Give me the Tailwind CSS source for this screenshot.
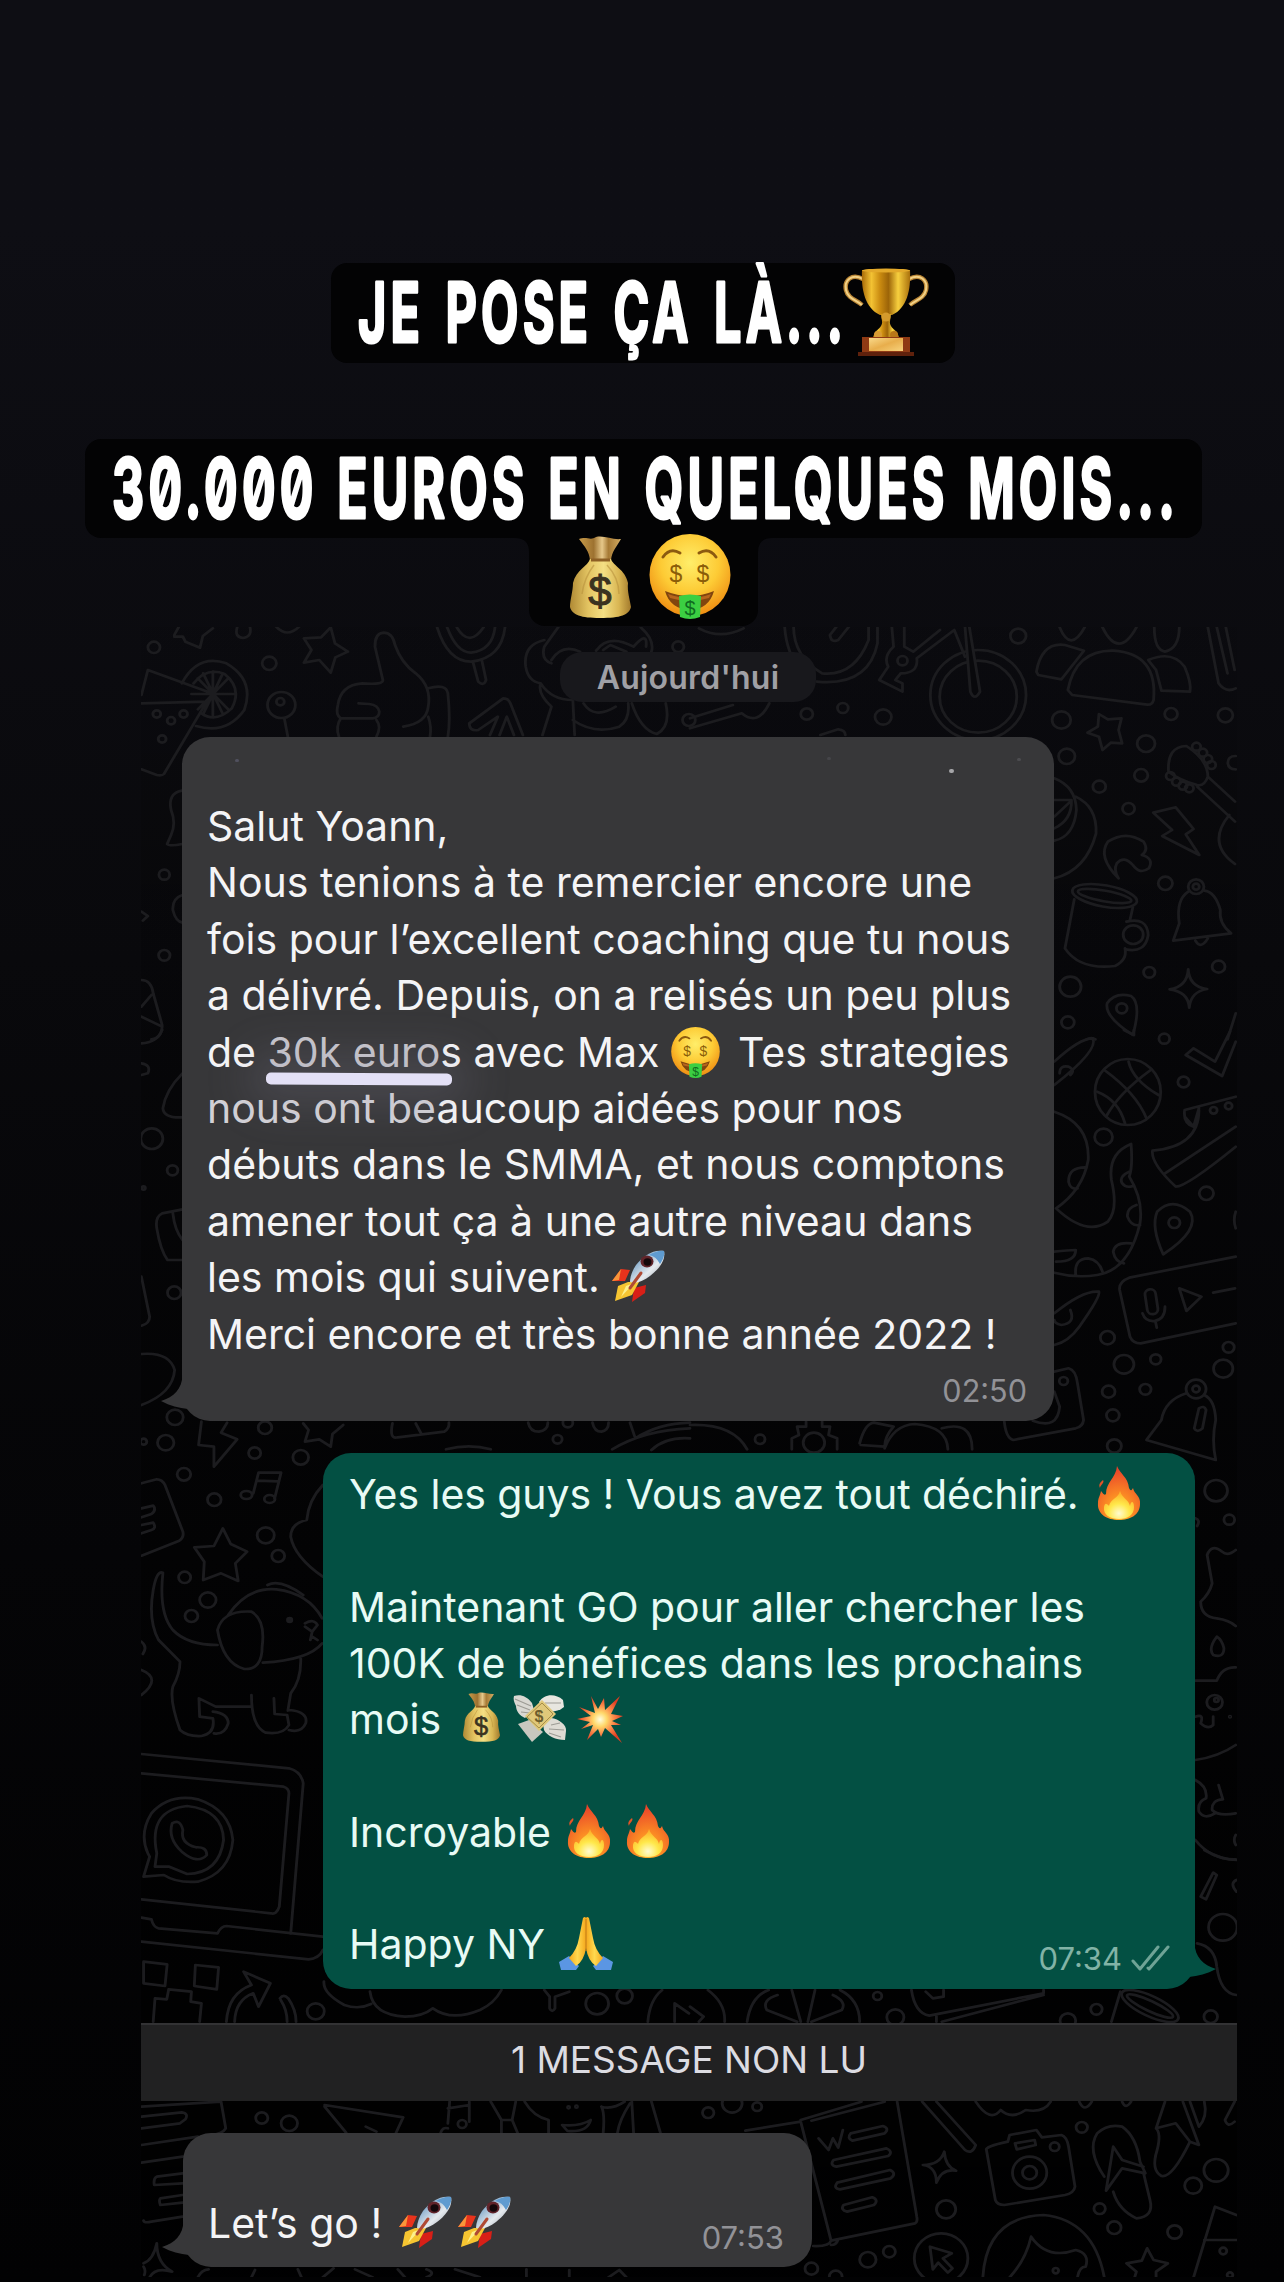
<!DOCTYPE html>
<html lang="fr">
<head>
<meta charset="utf-8">
<title>Story</title>
<meta name="viewport" content="width=1284">
<script src="https://cdn.jsdelivr.net/npm/@tailwindcss/browser@4"></script>
</head>
<body class="bg-black">

<!-- Shared emoji artwork -->
<svg class="absolute w-0 h-0" aria-hidden="true">
  <defs>
    <linearGradient id="gold" x1="0" x2="1" y1="0" y2="0"><stop offset="0" stop-color="#a86a08"/><stop offset=".2" stop-color="#f3c233"/><stop offset=".38" stop-color="#c98a10"/><stop offset=".55" stop-color="#9c6408"/><stop offset=".75" stop-color="#f7cf3e"/><stop offset="1" stop-color="#a9700c"/></linearGradient>
    <linearGradient id="plate" x1="0" x2="1" y1="0" y2="1"><stop offset="0" stop-color="#f9d98a"/><stop offset=".5" stop-color="#e8ae4c"/><stop offset="1" stop-color="#f7d27c"/></linearGradient>
    <linearGradient id="sack" x1="0" x2="1"><stop offset="0" stop-color="#b08a35"/><stop offset=".3" stop-color="#e3c462"/><stop offset=".55" stop-color="#f4df84"/><stop offset=".8" stop-color="#d9b653"/><stop offset="1" stop-color="#a37a2c"/></linearGradient>
    <linearGradient id="neck" x1="0" x2="1"><stop offset="0" stop-color="#c79a4a"/><stop offset=".35" stop-color="#9d7230"/><stop offset=".55" stop-color="#e6c88a"/><stop offset=".7" stop-color="#a77b36"/><stop offset="1" stop-color="#d2ab62"/></linearGradient>
    <radialGradient id="face" cx=".5" cy=".35" r=".65"><stop offset="0" stop-color="#ffee6a"/><stop offset=".55" stop-color="#fdcb35"/><stop offset="1" stop-color="#ef8d12"/></radialGradient>
    <radialGradient id="flame" cx=".5" cy=".85" r=".8"><stop offset="0" stop-color="#ffc42e"/><stop offset=".4" stop-color="#fb8b24"/><stop offset="1" stop-color="#e9432a"/></radialGradient>
    <radialGradient id="flame2" cx=".5" cy=".8" r=".7"><stop offset="0" stop-color="#fffbd0"/><stop offset=".5" stop-color="#ffe84a"/><stop offset="1" stop-color="#fdb52c"/></radialGradient>
    <linearGradient id="hull" x1="0" x2="1" y1="0" y2="1"><stop offset="0" stop-color="#3f82bf"/><stop offset=".35" stop-color="#9dbbd4"/><stop offset=".6" stop-color="#e6eaee"/><stop offset="1" stop-color="#8a95a3"/></linearGradient>
    <radialGradient id="boom"><stop offset="0" stop-color="#fffde0"/><stop offset=".3" stop-color="#ffd86a"/><stop offset=".6" stop-color="#fb8a4a"/><stop offset="1" stop-color="#e03c22"/></radialGradient>
    <linearGradient id="hand" x1="0" x2="1"><stop offset="0" stop-color="#f5a81c"/><stop offset=".5" stop-color="#ffd94f"/><stop offset="1" stop-color="#f5a81c"/></linearGradient>

    <symbol id="trophy" viewBox="0 0 86 89">
      <path d="M20 11C9 5 1 12 3 22C5 31 14 32 19 37" fill="none" stroke="#b98535" stroke-width="4.5"/>
      <path d="M20 11C9 5 1 12 3 22C5 31 14 32 19 37" fill="none" stroke="#f2d186" stroke-width="2"/>
      <path d="M66 11C77 5 85 12 83 22C81 31 72 32 67 37" fill="none" stroke="#b98535" stroke-width="4.5"/>
      <path d="M66 11C77 5 85 12 83 22C81 31 72 32 67 37" fill="none" stroke="#f2d186" stroke-width="2"/>
      <path d="M19 2H67C68 22 64 40 49 47H37C22 40 18 22 19 2Z" fill="url(#gold)"/>
      <ellipse cx="43" cy="2.5" rx="24" ry="2" fill="#e3a92a"/>
      <path d="M38 46H48L47 53C46 57 50 61 54 64L56 69H30L32 64C36 61 40 57 39 53Z" fill="url(#gold)"/>
      <circle cx="43" cy="49" r="4.5" fill="#d49a2c"/><circle cx="35" cy="67" r="4" fill="#d99c34"/><circle cx="51" cy="67" r="4" fill="#b87718"/>
      <path d="M19 69H67V84H71V88H15V84H19Z" fill="#8f3a14"/><path d="M15 84H71V88H15Z" fill="#5f210c"/>
      <path d="M26 70H60V83H26Z" fill="url(#plate)"/>
    </symbol>
    <symbol id="moneybag" viewBox="0 0 61 82">
      <path d="M9 3C17 0 20 5 26 1C34 -1 42 4 51 3C46 12 42 15 41 24H20C19 15 15 11 9 3Z" fill="url(#neck)"/>
      <path d="M20 23H41C43 30 55 33 58 47C57 55 60 64 61 71C59 79 51 82 30 82C11 82 2 79 0 71C0 64 3 55 3 47C6 34 18 30 20 23Z" fill="url(#sack)"/>
      <path d="M21 24H40" stroke="#8d5f24" stroke-width="3"/><path d="M24 29Q14 42 12 58M37 29Q49 42 49 58" stroke="#b9923d" stroke-width="1.5" fill="none" opacity=".6"/>
      <text x="30" y="70" text-anchor="middle" font-family="Liberation Sans" font-size="42" fill="#3b3320" stroke="#3b3320">$</text>
    </symbol>
    <symbol id="moneyface" viewBox="0 0 82 85">
      <ellipse cx="41" cy="41" rx="40.5" ry="41" fill="url(#face)"/>
      <path d="M14 23Q21 13 31 19M50 19Q60 13 67 23" fill="none" stroke="#8c5a10" stroke-width="3" stroke-linecap="round"/>
      <text x="27" y="48" text-anchor="middle" font-family="Liberation Sans" font-size="23" fill="#8b5d08">$</text>
      <text x="54" y="48" text-anchor="middle" font-family="Liberation Sans" font-size="23" fill="#8b5d08">$</text>
      <path d="M16 57Q41 67 65 57Q60 75 41 76Q21 75 16 57Z" fill="#80450f"/>
      <path d="M19 60Q41 68 62 60L60 64Q41 70 21 64Z" fill="#b7651d"/>
      <path d="M30 62Q41 59 52 62L51 83Q41 87 31 83Z" fill="#3bcf42"/>
      <text x="41" y="81" text-anchor="middle" font-family="Liberation Sans" font-size="20" fill="#0f6b20">$</text>
    </symbol>
    <symbol id="rocket" viewBox="0 0 53 52">
      <path d="M18 20L9 19L0 31L13 31Z" fill="#e8331c"/><path d="M9 19L0 31L7 30Z" fill="#f9963a"/>
      <path d="M34 35L33 43L20 52L22 38Z" fill="#d81f17"/>
      <path d="M16 32L27 32L20 45L3 51L6 36Z" fill="#f6c531"/><path d="M14 36L22 33L9 47Z" fill="#fdf08a"/>
      <path d="M52 1C41 -1 31 6 24 15C20 21 18 27 18 32C25 34 31 31 38 26C47 19 54 10 52 1Z" fill="url(#hull)"/>
      <path d="M52 1C48 0 42 2 37 5Q44 6 48 14C51 10 53 5 52 1Z" fill="#5f9bd0"/>
      <ellipse cx="35" cy="11.500" rx="6.500" ry="6" fill="#61242a"/><ellipse cx="35.500" cy="12" rx="4" ry="3.700" fill="#14080b"/>
      <path d="M29 23L18 38" stroke="#b04a34" stroke-width="3" stroke-linecap="round"/>
    </symbol>
    <symbol id="fire" viewBox="0 0 44 54">
      <path d="M20 0C23 8 31 11 32 22C33 24 34 26 36 22C37 28 44 30 43 38C43 49 33 54 22 54C10 54 0 48 1 37C1 32 3 30 4 25C6 27 7 30 9 28C9 16 19 12 20 0Z" fill="url(#flame)"/>
      <path d="M6 14C8 17 3 19 3 22C1 18 4 16 6 14Z" fill="#e45428"/>
      <path d="M23 25C25 32 32 34 33 40C34 34 37 35 37 41C37 49 31 53 22 53C13 53 6 49 7 41C8 36 10 38 12 40C13 33 22 32 23 25Z" fill="url(#flame2)"/>
    </symbol>
    <symbol id="wings" viewBox="0 0 54 48">
      <path d="M1 2C7 0 14 2 19 9L21 16L12 24C7 22 3 17 3 12C1 8 0 5 1 2Z" fill="#d9d8d2"/>
      <path d="M26 8C31 0 42 -1 50 6L51 13C45 18 38 18 33 17Z" fill="#e8e6e0"/>
      <path d="M5 30L16 26L30 38L19 48Z" fill="#c9c7bf"/>
      <path d="M30 30L38 24C46 25 54 31 53 37L52 46C43 46 34 42 31 36Z" fill="#dedcd4"/>
      <path d="M2 5L18 12M4 11L17 16M8 18L17 19M47 29L38 31M51 36L36 35M48 43L36 39M32 9L48 9" stroke="#9d9c95" stroke-width="1.200"/>
      <path d="M12 22L29 6L43 20L26 37Z" fill="#e0c87a"/><path d="M14 23L29 9L40 20L26 34Z" fill="none" stroke="#a68d48"/>
      <text x="26" y="28" text-anchor="middle" font-family="Liberation Sans" font-weight="bold" font-size="16" fill="#6d5c2d">$</text>
    </symbol>
    <symbol id="collision" viewBox="0 0 46 48">
      <path d="M14 1L21 14L27 3L28 15L43 1L34 19L46 21L35 26L44 30L34 30L45 48L28 33L24 42L21 34L10 45L16 30L4 34L13 27L0 24L14 21L2 12L18 18Z" fill="url(#boom)"/>
    </symbol>
    <symbol id="pray" viewBox="0 0 54 54">
      <path d="M0 46L10 40L20 50L17 54H2ZM54 46L44 40L34 50L37 54H52Z" fill="#5b96e3"/>
      <path d="M24 2Q26 0 27 2L27 32Q25 45 17 50L10 42Q18 34 20 22Z" fill="url(#hand)"/>
      <path d="M30 2Q28 0 27 2L27 32Q29 45 37 50L44 42Q36 34 34 22Z" fill="url(#hand)"/>
      <path d="M27 3V35" stroke="#c9821a" stroke-width="1.200"/>
    </symbol>
    <symbol id="tail" viewBox="0 0 60 46"><path d="M21.500 0C21 14 13 22 0 26C9 31 18 33 27 34C36 42 44 46 60 46V0Z"/></symbol>
  </defs>
</svg>

<main class="relative flex h-[2282px] w-[1284px] flex-col overflow-hidden bg-linear-to-b from-[#0e0e14] from-10% via-[#09090c] via-42% to-[#020203] to-100% font-[Inter,sans-serif]">

  <!-- Story captions -->
  <header class="flex h-[627px] shrink-0 flex-col items-center pt-[263px]">
    <div class="flex h-[100px] w-[624px] translate-x-[1px] items-start rounded-2xl bg-[#030304] pl-[27px]">
      <svg class="h-[110px] w-[485px] shrink-0 overflow-visible" viewBox="0 0 485 110">
        <text x="0" y="79" textLength="489" lengthAdjust="spacingAndGlyphs" letter-spacing="7" word-spacing="10" font-size="83" font-weight="700" fill="#fff" stroke="#fff" stroke-width="3" stroke-linejoin="round">JE POSE ÇA LÀ...</text>
      </svg>
      <svg class="mt-[5px] h-[89px] w-[86px]"><use href="#trophy"/></svg>
    </div>
    <div class="mt-[76px] flex h-[99px] w-[1117px] translate-x-[1px] items-start rounded-2xl bg-[#030304] pl-[27px]">
      <svg class="h-[99px] w-[1070px] shrink-0 overflow-visible" viewBox="0 0 1070 99">
        <text class="slashed-zero" x="0" y="79" textLength="1067" lengthAdjust="spacingAndGlyphs" letter-spacing="7" word-spacing="6" font-size="83" font-weight="700" fill="#fff" stroke="#fff" stroke-width="3" stroke-linejoin="round">30.000 EUROS EN QUELQUES MOIS...</text>
      </svg>
    </div>
    <div class="relative flex h-[88px] w-[229px] translate-x-[1px] items-start gap-[18px] rounded-b-2xl bg-[#030304] pl-[41px]">
      <svg class="absolute -left-[14px] top-0 h-[14px] w-[14px]" viewBox="0 0 14 14"><path d="M0 0H14V14Q14 0 0 0Z" fill="#030304"/></svg>
      <svg class="absolute -right-[14px] top-0 h-[14px] w-[14px]" viewBox="0 0 14 14"><path d="M14 0H0V14Q0 0 14 0Z" fill="#030304"/></svg>
      <svg class="-mt-[2px] h-[82px] w-[61px]"><use href="#moneybag"/></svg>
      <svg class="-mt-[4px] h-[85px] w-[82px]"><use href="#moneyface"/></svg>
    </div>
  </header>

  <!-- Chat -->
  <section class="relative ml-[141px] flex h-[1650px] w-[1096px] shrink-0 flex-col bg-linear-to-b from-black/5 to-black/80">

    <!-- Doodle wallpaper -->
    <svg class="absolute inset-0 h-[1650px] w-[1096px]" viewBox="141 627 1096 1650" fill="none" stroke="#1c1c1f" stroke-width="8" stroke-linecap="round" stroke-linejoin="round" aria-hidden="true">
      <g transform="translate(130 620) scale(.35714 .33333)">
        <circle cx="67" cy="82" r="17"/><path d="M124 50L148 50L155 65L196 83L204 48L232 25M124 45L137 20"/><path d="M300 22Q292 52 317 54Q342 50 336 22M405 15Q440 60 478 15"/>
        <circle cx="390" cy="130" r="20"/><path d="M562 22L574 70L610 95L575 112L562 158L530 120L487 128L508 90L487 55L535 52Z"/>
        <path d="M32 225L50 150L225 218M32 250L215 245L95 462Q90 468 75 465L32 448M145 190Q190 100 270 130Q350 180 320 270Q270 345 185 318M178 190Q215 140 265 162Q315 205 285 265Q240 310 200 280M232 155V285M172 222H295M190 175L275 268M275 175L190 268M205 160L260 282M260 160L205 282"/>
        <circle cx="75" cy="282" r="11"/><circle cx="150" cy="282" r="11"/><circle cx="115" cy="302" r="11"/><circle cx="90" cy="357" r="11"/>
        <circle cx="424" cy="255" r="39"/><circle cx="421" cy="245" r="11"/><path d="M432 295L442 350"/>
        <path d="M585 350Q575 320 590 295Q575 285 582 255Q590 195 650 190Q710 195 708 180L686 80Q685 40 710 38Q735 38 742 75Q760 130 800 160Q845 200 835 260Q830 310 765 320M590 295H680Q698 292 698 275Q695 255 670 252L640 250M690 300Q705 320 690 350M835 205Q885 190 890 220Q898 300 890 350M835 290Q845 320 840 350"/>
        <path d="M860 22Q890 125 955 125Q1040 115 1050 22M888 22Q915 98 955 98Q1015 90 1022 22M915 22Q950 85 990 22M960 125L975 185Q990 200 997 180L985 120"/>
        <path d="M950 310L1045 235Q1060 235 1065 250L1100 345M950 310Q950 335 975 330L1030 290L1008 345M1035 345L1055 290L1075 345"/>
        <path d="M1200 20L1160 80Q1150 120 1180 130M1160 60Q1100 75 1108 140Q1115 185 1150 190Q1140 220 1180 260L1155 345M1150 190Q1180 240 1240 240L1245 345M1240 300Q1300 345 1370 320Q1400 300 1395 250M1270 250Q1300 300 1360 260M1405 250Q1430 330 1475 342Q1515 320 1500 250M1180 120Q1210 70 1260 95M1305 92Q1340 40 1410 80Q1450 30 1445 80M1430 22Q1470 60 1460 95M1325 90L1345 75L1390 95"/>
        <circle cx="1535" cy="80" r="16"/><circle cx="1565" cy="300" r="18"/>
        <path d="M145 512Q105 520 115 570Q130 610 115 645L104 672Q110 680 147 672"/><circle cx="96" cy="764" r="15"/><path d="M32 875L50 888L36 902M147 825Q118 835 120 870Q128 905 147 908"/><circle cx="96" cy="1006" r="16"/>
        <path d="M32 1080Q60 1080 65 1120L90 1215Q90 1255 60 1258M32 1160L60 1125M32 1190L90 1220"/>
      </g>
      <g transform="translate(690 620) scale(.35714 .33333)">
        <path d="M25 25Q85 60 150 25M265 20Q270 100 310 150M290 20Q290 110 370 160Q460 170 500 60V20M355 185Q500 200 525 70V20M445 20L415 60Q395 70 392 45L410 20"/>
        <path d="M565 20L570 80Q540 110 555 140L530 180L595 215V190L575 180L590 160Q640 160 635 115L740 30L770 110M600 20V80L625 95L700 30"/><circle cx="595" cy="122" r="14"/>
        <ellipse cx="807" cy="225" rx="134" ry="135"/><circle cx="807" cy="230" r="108"/><path d="M770 20L785 215Q797 245 812 215L782 20" fill="#09090c"/>
        <circle cx="919" cy="48" r="22"/><path d="M1035 22Q1065 100 1105 22M1155 22Q1200 120 1250 22M1300 22Q1300 90 1330 95Q1370 85 1370 22M1450 22L1480 190Q1500 220 1528 205M1475 22L1505 160M1500 20L1525 150"/>
        <path d="M970 155Q985 65 1050 75L1103 92L1040 178L975 165ZM1058 210Q1080 90 1185 92Q1310 100 1298 240Q1295 255 1280 254L1070 225ZM1283 120Q1350 90 1385 140Q1405 190 1400 215L1320 212L1305 150Z"/>
        <circle cx="327" cy="282" r="17"/><circle cx="428" cy="264" r="15"/><circle cx="541" cy="291" r="23"/><path d="M0 295L120 255M0 325L145 280Q190 320 222 250M365 345L415 328Q435 330 435 345"/>
        <circle cx="1040" cy="300" r="26"/><circle cx="1347" cy="282" r="18"/><circle cx="1499" cy="286" r="21"/><path d="M1145 282L1170 298L1208 295L1200 330L1210 370L1178 368L1155 390L1145 350L1113 338L1142 320Z"/>
        <circle cx="1277" cy="371" r="25"/><circle cx="1055" cy="409" r="23"/><circle cx="1263" cy="466" r="19"/><circle cx="1146" cy="500" r="18"/><circle cx="1228" cy="566" r="17"/><path d="M1528 408Q1505 408 1506 430Q1508 448 1528 448"/>
        <path d="M1340 455Q1335 380 1390 378Q1450 420 1450 470Q1440 500 1420 495Q1370 480 1340 455ZM1450 470L1526 545M1420 500L1526 605M1510 585Q1445 670 1526 732"/>
        <circle cx="1418" cy="380" r="12"/><circle cx="1436" cy="398" r="12"/><circle cx="1450" cy="417" r="12"/><circle cx="1460" cy="435" r="12"/><circle cx="1345" cy="468" r="12"/><circle cx="1362" cy="485" r="12"/><circle cx="1380" cy="497" r="12"/><circle cx="1398" cy="505" r="12"/>
        <path d="M1297 578L1360 562L1410 627L1388 643L1426 705L1322 648L1350 630Z"/>
        <path d="M1020 475Q1080 500 1082 570Q1075 650 1020 662M1080 530Q1140 560 1137 640Q1110 750 1020 775M1020 540H1068Q1070 600 1020 625M1020 590L1065 545"/>
        <path d="M1200 775Q1140 710 1170 665Q1220 630 1270 665Q1285 690 1265 705Q1300 715 1285 745Q1260 765 1240 735Q1215 705 1195 730Q1185 750 1200 775Z"/>
        <ellipse cx="1161" cy="828" rx="92" ry="32" transform="rotate(11 1161 828)"/><ellipse cx="1161" cy="828" rx="76" ry="16" transform="rotate(11 1161 828)"/><path d="M1076 838L1050 985Q1090 1050 1190 1038Q1225 1020 1218 985M1240 862L1232 900"/><circle cx="1241" cy="944" r="28"/><path d="M1222 905Q1280 890 1283 945Q1275 1000 1220 988"/>
        <circle cx="1331" cy="790" r="20"/><circle cx="1417" cy="800" r="22"/><circle cx="1417" cy="800" r="9"/><path d="M1395 815Q1360 840 1370 910L1353 962L1515 940Q1480 910 1485 870Q1470 815 1440 812M1415 962Q1430 990 1450 955"/>
        <circle cx="1480" cy="1040" r="18"/><circle cx="1286" cy="1057" r="16"/><circle cx="1065" cy="1100" r="30"/><path d="M1395 1048Q1398 1100 1448 1107Q1402 1115 1398 1163Q1395 1115 1343 1108Q1392 1100 1395 1048Z"/>
        <path d="M1240 1245Q1160 1190 1168 1150Q1190 1115 1235 1128Q1265 1150 1240 1245Z"/><circle cx="1209" cy="1165" r="15"/><circle cx="1058" cy="1207" r="18"/><path d="M1505 1258L1528 1180M1110 1258Q1125 1250 1135 1258"/>
      </g>
      <g transform="translate(130 1030) scale(.35714 .33333)">
        <path d="M32 40Q75 38 90 0M32 100Q60 105 50 130L32 135M147 130Q100 180 92 235Q95 265 147 262"/><circle cx="61" cy="326" r="31"/><circle cx="119" cy="421" r="15"/><circle cx="38" cy="474" r="5"/>
        <path d="M147 538L90 550Q70 560 75 595Q85 660 105 690L147 690M120 550Q125 600 147 630M32 740L55 860Q55 880 32 887"/><circle cx="124" cy="788" r="19"/><path d="M32 972Q110 965 125 1020Q120 1090 32 1125"/>
        <circle cx="126" cy="1162" r="23"/><circle cx="100" cy="1238" r="23"/><circle cx="38" cy="1235" r="9"/><path d="M200 1175L192 1245L235 1250L235 1310L300 1228L255 1208L272 1178"/><circle cx="378" cy="1193" r="19"/>
        <path d="M485 1180L500 1200L490 1235L530 1228L562 1250L567 1212L597 1185M735 1180Q725 1230 750 1222L880 1205Q895 1195 893 1178M800 1180L815 1210"/>
        <path d="M1115 1178Q1120 1205 1145 1205Q1170 1200 1170 1178M1295 1178Q1300 1205 1320 1205Q1340 1200 1340 1178M1400 1178L1415 1225Q1480 1180 1568 1178M1350 1258Q1440 1200 1568 1195"/><circle cx="1197" cy="1228" r="13"/><circle cx="1226" cy="1178" r="14"/><path d="M885 1258Q950 1240 1010 1258M1460 1260Q1500 1220 1568 1225"/>
      </g>
      <g transform="translate(690 1030) scale(.35714 .33333)">
        <path d="M1020 95Q1090 25 1128 25Q1145 60 1020 165M1035 130Q1035 105 1060 110Q1080 120 1065 135M1215 0L1243 15V0"/><circle cx="1328" cy="26" r="15"/><circle cx="1382" cy="156" r="16"/>
        <path d="M1512 5L1470 95L1410 55L1388 75L1490 138L1528 35"/>
        <ellipse cx="1226" cy="186" rx="92" ry="99"/><path d="M1160 120Q1250 190 1278 265M1228 95Q1240 150 1312 195M1290 120Q1200 190 1165 260M1140 185Q1200 210 1218 280"/>
        <circle cx="1158" cy="321" r="25"/><path d="M1020 245Q1120 280 1115 390Q1100 480 1025 535Q1110 620 1170 575Q1200 540 1180 450Q1170 370 1235 342Q1240 410 1230 440Q1270 510 1260 580Q1230 720 1140 735Q1080 745 1020 728M1110 412Q1060 410 1060 455Q1065 480 1085 475M1230 425Q1200 440 1210 460Q1220 475 1240 468M1250 525Q1222 535 1225 560Q1235 590 1260 585M1235 640Q1190 635 1185 665Q1190 695 1215 700M1080 735Q1075 685 1115 685Q1145 690 1155 725M1020 665Q1060 660 1080 660Q1080 695 1025 695"/>
        <path d="M1528 200L1385 240Q1380 280 1410 290L1425 235M1425 240Q1425 350 1295 362Q1290 400 1360 470Q1390 470 1528 350M1330 430L1528 290M1410 290L1385 260"/><circle cx="1466" cy="241" r="10"/><circle cx="1508" cy="228" r="10"/>
        <circle cx="1446" cy="490" r="20"/><path d="M1325 673Q1290 590 1308 545Q1350 500 1400 545Q1430 600 1325 673Z"/><circle cx="1356" cy="578" r="16"/><path d="M1528 545Q1520 570 1528 595"/>
        <path d="M1528 680L1230 743Q1200 755 1203 780L1232 920Q1240 940 1262 940L1528 880M1465 788L1526 775M1370 775L1390 843L1432 800Z"/><rect x="1277" y="778" width="30" height="75" rx="15" transform="rotate(-8 1290 815)"/><path d="M1267 850Q1275 875 1300 873Q1330 868 1330 830M1303 873L1307 893"/>
        <path d="M1020 850Q1100 780 1145 785Q1150 800 1090 890Q1060 935 1020 945M1065 840Q1080 880 1040 885Q1020 880 1020 870"/>
        <circle cx="1169" cy="923" r="20"/><circle cx="1215" cy="1003" r="28"/><circle cx="1304" cy="988" r="15"/><circle cx="1508" cy="952" r="16"/><circle cx="1493" cy="1016" r="27"/><circle cx="1172" cy="1085" r="18"/><circle cx="1275" cy="1078" r="16"/><circle cx="1184" cy="1156" r="18"/><circle cx="1417" cy="1077" r="28"/><circle cx="1417" cy="1077" r="10"/>
        <path d="M1390 1090Q1330 1110 1320 1170L1278 1230L1472 1290Q1460 1230 1472 1170Q1470 1110 1440 1095M1425 1135Q1440 1125 1445 1140L1435 1195Q1420 1210 1412 1195Z"/>
        <path d="M1020 1025L1060 1015Q1080 1020 1085 1060L1102 1170Q1100 1190 1080 1195L905 1230Q885 1225 880 1175M960 1172Q1030 1200 1035 1130L1020 1085"/><circle cx="1046" cy="1053" r="12"/>
        <path d="M0 1185Q120 1180 160 1258M285 1258V1225L305 1215L300 1190H325V1175M412 1258V1225L388 1215L392 1190H370V1175M475 1240Q490 1180 515 1178L570 1190Q545 1220 545 1250L478 1245M545 1255Q570 1185 630 1182Q720 1190 722 1258M705 1195Q790 1170 790 1258"/><circle cx="347" cy="1238" r="30"/><circle cx="196" cy="1228" r="14"/><circle cx="1188" cy="1248" r="20"/>
      </g>
      <g transform="translate(130 1440) scale(.35714 .33333)">
        <circle cx="349" cy="39" r="17"/><circle cx="478" cy="52" r="22"/><circle cx="151" cy="103" r="19"/><circle cx="236" cy="179" r="19"/>
        <path d="M345 160L360 98H423L405 175M355 122L415 124"/><ellipse cx="326" cy="165" rx="16" ry="12"/><ellipse cx="391" cy="177" rx="15" ry="12"/>
        <path d="M32 130L75 118Q90 118 98 135L148 275Q152 292 138 302L32 347M32 205L65 197Q75 210 60 222L32 232M32 255L65 248Q75 265 60 270L32 280M540 135Q500 180 495 240Q450 250 450 290Q460 350 540 410"/>
        <circle cx="380" cy="286" r="24"/><circle cx="415" cy="348" r="18"/><path d="M260 265L282 312L328 335L295 370L303 423L255 400L205 420L208 365L180 322L235 318Z"/>
        <circle cx="153" cy="412" r="17"/><circle cx="218" cy="480" r="23"/><circle cx="172" cy="528" r="18"/>
        <path d="M92 398Q75 390 65 450Q50 540 80 600L140 665Q140 700 120 740Q110 780 140 870Q160 890 200 888Q240 880 232 835L195 830L193 775L240 800H340M92 400Q80 520 120 570Q160 615 245 615M275 525Q330 440 410 448Q500 460 538 535M245 570Q260 510 340 515Q380 540 370 620Q370 690 320 687Q260 670 245 570ZM372 668Q500 660 538 610M478 655Q480 720 450 760L442 812M340 765Q340 860 380 878Q430 885 445 855L440 825L405 822L403 775M232 815Q275 820 275 850Q265 885 235 880M445 810Q500 815 492 850Q480 880 445 870M385 435Q420 415 485 465M490 550Q515 535 525 555L510 575L490 560M510 575L505 600M510 590L525 600"/><circle cx="447" cy="540" r="6" fill="#1c1c1f"/>
        <path d="M32 605Q50 620 36 642M32 690Q90 715 32 765M32 942L445 985Q480 995 485 1030L450 1480M32 1000L430 1040Q445 1045 445 1060L418 1400Q410 1425 395 1420L32 1378"/>
        <path d="M50 1240Q25 1180 60 1120Q110 1060 190 1078Q280 1110 288 1200Q280 1300 190 1325Q130 1330 95 1305L38 1310L55 1250Z"/><path d="M75 1240Q50 1110 160 1098Q260 1110 262 1200Q250 1300 160 1302L110 1280L70 1280Z"/><path d="M118 1150Q140 1135 148 1170Q140 1210 185 1222Q215 1220 215 1245Q190 1275 145 1235Q105 1195 118 1150Z"/>
      </g>
      <g transform="translate(690 1440) scale(.35714 .33333)">
        <circle cx="1473" cy="152" r="32"/><circle cx="1510" cy="239" r="15"/><path d="M1415 235Q1430 240 1420 258M1528 330Q1505 350 1490 335Q1460 310 1448 345L1462 430Q1455 460 1430 485Q1430 530 1475 535Q1510 540 1528 558M1475 590Q1450 625 1465 645Q1495 655 1495 625Q1490 600 1475 590ZM1415 722H1475Q1490 680 1528 682M1415 830Q1440 820 1430 850Q1450 870 1465 855V830M1415 960Q1480 950 1528 915M1415 1020Q1450 1040 1445 1075Q1420 1085 1425 1115Q1440 1140 1470 1120M1480 1035L1492 1078Q1460 1080 1462 1110Q1480 1130 1528 1120M1415 1200Q1460 1260 1528 1258M1528 1185Q1520 1200 1528 1215"/><circle cx="1469" cy="787" r="22"/><circle cx="1474" cy="780" r="6"/><circle cx="1512" cy="830" r="2"/>
      </g>
      <g transform="translate(130 1850) scale(.35714 .33333)">
        <path d="M32 203L60 208Q65 232 80 235L245 250Q255 228 270 228L540 260M32 275L500 328Q530 325 540 300M38 335L104 343L98 408L38 400ZM183 345L248 352L243 418L180 408ZM108 418L172 425L170 455L200 460L195 515M108 420L103 448L70 445L65 515M270 515Q275 430 340 405L318 365L393 400L360 470L345 430Q295 450 293 515M420 445Q430 430 443 445Q465 480 465 515M422 450Q440 480 440 515"/><circle cx="520" cy="484" r="24"/>
        <path d="M543 395Q540 430 600 465Q640 480 675 462M672 425Q680 495 770 500Q820 500 848 475Q900 515 980 480Q1020 460 1040 420M1160 420L1175 440V475Q1182 490 1190 475V440L1230 425M1450 515Q1455 450 1490 420M1525 515V460L1565 490"/><circle cx="1308" cy="461" r="32"/><circle cx="1385" cy="438" r="22"/>
        <path d="M32 770L255 755L268 835Q260 850 230 855M32 800L145 787Q165 790 155 808L140 820L32 835M32 885L190 860M32 938L147 920M147 970L75 980Q65 985 68 1005L147 1000M147 1035L85 1045Q80 1050 85 1065L147 1058M38 1112Q40 1120 60 1115L147 1100M75 1180Q65 1230 38 1240M75 1180Q75 1240 118 1265Q70 1250 55 1282M38 1250Q45 1260 40 1275"/>
        <circle cx="369" cy="804" r="17"/><circle cx="446" cy="820" r="23"/><path d="M545 770L605 848M545 765L765 802L745 848M660 830L690 845M895 755L890 820M950 755V815M890 775L950 765M870 848Q875 830 890 835M1010 755L1040 810V848M1080 755L1070 810M1040 810H1070L1085 848M1105 755Q1130 800 1172 810V848M1210 825Q1260 830 1290 810Q1280 848 1225 843ZM1320 770Q1330 790 1325 848M1400 760Q1370 810 1365 848M1405 755L1410 848M1460 755L1485 848M1320 770Q1350 780 1385 755"/><circle cx="930" cy="822" r="12"/><circle cx="1228" cy="772" r="3"/><circle cx="1250" cy="770" r="3"/>
        <path d="M190 1282Q200 1260 220 1258M340 1282L350 1260M470 1258L480 1282M540 1282L570 1255M630 1258L680 1282M750 1258L770 1282M830 1258Q860 1270 830 1282M910 1258L980 1282M1110 1258V1282M1230 1260V1282M1340 1282L1370 1260L1390 1282"/>
      </g>
      <g transform="translate(690 1850) scale(.35714 .33333)">
        <path d="M1440 0Q1490 30 1530 30M1465 68L1430 140L1445 148L1475 75ZM1530 90Q1510 100 1530 125M1420 280Q1470 290 1475 350Q1485 430 1530 435"/><circle cx="1492" cy="232" r="40"/>
        <path d="M50 420Q100 460 97 515M0 470L38 500L25 515M160 515Q170 440 220 420M420 420Q475 450 475 515M285 420L310 515M350 420L330 515M245 435Q200 450 215 480L300 515M400 435Q440 455 425 480L340 515"/><circle cx="525" cy="438" r="12"/><circle cx="575" cy="502" r="24"/>
        <path d="M620 420Q630 490 670 497L990 430V420M690 515V495M705 515L990 435M660 425L680 445L710 440V420M1180 515L1205 425"/><ellipse cx="1288" cy="468" rx="88" ry="30" transform="rotate(27 1288 468)"/><ellipse cx="1288" cy="468" rx="72" ry="15" transform="rotate(27 1288 468)"/><circle cx="1138" cy="478" r="16"/><circle cx="1458" cy="500" r="19"/><circle cx="1058" cy="512" r="22"/>
        <circle cx="51" cy="788" r="16"/><circle cx="188" cy="770" r="13"/><circle cx="118" cy="760" r="28"/><path d="M155 842L310 815L395 1172L630 1120Q638 1115 635 1100L580 755M310 810L480 755M340 812L545 755M395 1172Q390 1190 345 1188M415 1168Q410 1185 395 1185"/>
        <path d="M360 865L388 900L400 865L415 893L428 840M450 850L540 828Q560 835 545 850L455 872Q438 865 450 850ZM402 930L550 895Q570 905 555 918L410 950Q390 945 402 930ZM412 998L560 960Q580 970 562 985L420 1018Q400 1015 412 998ZM430 1065L510 1042Q530 1050 515 1065L440 1085Q420 1080 430 1065Z"/>
        <path d="M650 755L770 900Q790 915 800 885L690 755M712 905Q715 950 745 962Q705 955 690 998Q690 950 652 945Q700 945 712 905ZM800 755Q840 820 870 780Q900 810 940 780Q990 790 1010 755M1090 755Q1105 790 1125 755M1210 755Q1220 780 1235 755"/><circle cx="717" cy="1078" r="27"/>
        <path d="M830 900Q825 890 890 875L895 855L970 840L985 862L1040 855Q1055 860 1060 890L1078 1010Q1075 1030 1050 1035L880 1065Q860 1065 855 1050ZM910 880L965 870L968 885L915 898Z"/><circle cx="951" cy="968" r="48"/><circle cx="951" cy="968" r="20"/><circle cx="1021" cy="890" r="13"/><circle cx="1097" cy="832" r="16"/>
        <path d="M1160 980Q1110 900 1140 850Q1170 820 1210 830Q1250 860 1260 935L1275 970L1210 955L1165 1022L1185 890L1210 930L1270 950M1185 1025Q1200 1080 1250 1105Q1300 1100 1288 1050L1270 970M1330 755L1305 835Q1320 850 1308 900Q1290 960 1320 978Q1350 985 1400 875L1360 820L1305 835M1380 755L1425 885L1400 875M1400 755L1425 830Q1450 800 1440 755M1525 755L1498 810Q1505 835 1525 815"/>
        <circle cx="1473" cy="961" r="34"/><circle cx="1409" cy="1007" r="24"/><circle cx="1147" cy="1076" r="16"/><circle cx="1188" cy="1133" r="19"/><circle cx="1357" cy="1146" r="20"/>
        <circle cx="498" cy="1229" r="23"/><circle cx="558" cy="1205" r="17"/><circle cx="340" cy="1256" r="18"/><circle cx="408" cy="1280" r="18"/><circle cx="703" cy="1225" r="75"/><path d="M672 1190L733 1210L708 1225L735 1255L722 1268L695 1238L680 1258Z"/>
        <path d="M820 1282Q830 1100 990 1095Q1130 1110 1160 1282M895 1282Q940 1230 955 1160Q1000 1230 1080 1200Q1120 1210 1108 1250Q1090 1250 1085 1282"/><circle cx="1024" cy="1262" r="8"/>
        <path d="M1280 1195L1298 1230L1338 1240L1305 1265V1282M1280 1195L1265 1232L1222 1240L1250 1265L1245 1282M1530 1095L1470 1070L1410 1282M1440 1170H1530"/><circle cx="1493" cy="1203" r="10"/><circle cx="1512" cy="1275" r="8"/>
      </g>
    </svg>

    <!-- Date pill -->
    <div class="relative mt-[25px] ml-[419px] flex h-[50px] w-[256px] items-center justify-center rounded-[22px] bg-[#18181c] pt-px">
      <span class="text-[32px] font-semibold tracking-[.2px] whitespace-nowrap text-[#a0a0a5]">Aujourd'hui</span>
    </div>

    <!-- Incoming message -->
    <article class="relative mt-[35px] ml-[41px] h-[684px] w-[872px] shrink-0 rounded-[28px] bg-[#373739] pt-[61px] pl-[25px] text-[41px] text-[#f4f4f6]">
      <svg class="absolute -left-[21px] bottom-0 h-[46px] w-[60px] fill-[#373739]"><use href="#tail"/></svg>
      <i class="absolute top-[32px] left-[767px] h-[4px] w-[5px] rounded-full bg-[#a5a5a8]"></i>
      <i class="absolute top-[22px] left-[53px] h-[3px] w-[4px] rounded-full bg-[#50505e]"></i>
      <i class="absolute top-[21px] left-[835px] h-[3px] w-[4px] rounded-full bg-[#4c4c50]"></i>
      <i class="absolute top-[20px] left-[645px] h-[3px] w-[4px] rounded-full bg-[#454549]"></i>
      <div class="relative flex flex-col leading-[56.4px] whitespace-nowrap">
        <p>Salut Yoann,</p>
        <p>Nous tenions à te remercier encore une</p>
        <p>fois pour l’excellent coaching que tu nous</p>
        <p>a délivré. Depuis, on a relisés un peu plus</p>
        <div class="flex h-[56.4px]">
          <p class="w-[463px]">de <span class="text-[#c6c5cb]">30k euro</span>s avec Max</p>
          <svg class="mt-[3px] h-[51px] w-[51px]"><use href="#moneyface"/></svg>
          <p class="ml-[17px]">Tes strategies</p>
        </div>
        <p><span class="text-[#d2d1d6]">nous ont be</span>aucoup aidées pour nos</p>
        <p class="tracking-[.08px]">débuts dans le SMMA, et nous comptons</p>
        <p>amener tout ça à une autre niveau dans</p>
        <div class="flex h-[56.4px]">
          <p class="w-[405px]">les mois qui suivent.</p>
          <svg class="mt-[1px] h-[52px] w-[53px]"><use href="#rocket"/></svg>
        </div>
        <p>Merci encore et très bonne année 2022 !</p>
      </div>
      <i class="absolute top-[336px] left-[84px] h-[12px] w-[186px] rotate-[.3deg] rounded-[5px] bg-[#e3e0f6] shadow-[0_0_45px_18px_rgba(150,145,170,.2)]"></i>
      <time class="absolute right-[27px] bottom-[10px] text-[30.6px] leading-[40px] text-[#929297]">02:50</time>
    </article>

    <!-- Outgoing message -->
    <article class="relative mt-[32px] ml-[182px] h-[536px] w-[872px] shrink-0 rounded-[28px] bg-[#035043] pt-[13px] pl-[26px] text-[41px] text-[#e8fbf5]">
      <svg class="absolute -right-[21px] bottom-0 h-[46px] w-[60px] -scale-x-100 fill-[#035043]"><use href="#tail"/></svg>
      <div class="relative flex flex-col leading-[56.3px] whitespace-nowrap">
        <div class="flex h-[56.3px]">
          <p class="w-[748px] tracking-[-.06px]">Yes les guys ! Vous avez tout déchiré.</p>
          <svg class="h-[54px] w-[44px]"><use href="#fire"/></svg>
        </div>
        <p class="mt-[56.3px]">Maintenant GO pour aller chercher les</p>
        <p>100K de bénéfices dans les prochains</p>
        <div class="flex h-[56.3px]">
          <p class="w-[114px]">mois</p>
          <svg class="mt-[1px] h-[50px] w-[37px]"><use href="#moneybag"/></svg>
          <svg class="mt-[3px] ml-[13px] h-[48px] w-[54px]"><use href="#wings"/></svg>
          <svg class="mt-[4px] ml-[10px] h-[48px] w-[46px]"><use href="#collision"/></svg>
        </div>
        <div class="mt-[56.3px] flex h-[56.3px]">
          <p class="w-[218px]">Incroyable</p>
          <svg class="h-[54px] w-[44px]"><use href="#fire"/></svg>
          <svg class="ml-[15px] h-[54px] w-[44px]"><use href="#fire"/></svg>
        </div>
        <div class="mt-[56.3px] flex h-[56.3px]">
          <p class="w-[210px]">Happy NY</p>
          <svg class="h-[54px] w-[54px]"><use href="#pray"/></svg>
        </div>
      </div>
      <div class="absolute right-[25px] bottom-[10px] flex items-center gap-[9px] text-[31px] leading-[40px] text-[#82b3a6]">
        <time>07:34</time>
        <svg class="mb-[3px] h-[26px] w-[39px]" viewBox="0 0 39 26" fill="none" stroke="#6fa396" stroke-width="3" stroke-linecap="round" stroke-linejoin="round"><path d="M2 16L9 24L27 2M17 23L18 24L37 2"/></svg>
      </div>
    </article>

    <!-- Unread separator -->
    <div class="relative mt-[34px] flex h-[78px] shrink-0 items-center justify-center border-t-2 border-[#323234] bg-[#212122] pb-[8px]">
      <span class="text-[37px] leading-none whitespace-nowrap text-[#dcdce2]">1 MESSAGE NON LU</span>
    </div>

    <!-- Incoming message -->
    <article class="relative mt-[32px] ml-[42px] h-[134px] w-[629px] shrink-0 rounded-[28px] bg-[#373739] pt-[62px] pl-[25px] text-[41px] text-[#f4f4f6]">
      <svg class="absolute -left-[21px] bottom-0 h-[46px] w-[60px] fill-[#373739]"><use href="#tail"/></svg>
      <div class="relative flex leading-[56.4px] whitespace-nowrap">
        <p class="w-[191px]">Let’s go !</p>
        <svg class="mt-[1px] h-[52px] w-[53px]"><use href="#rocket"/></svg>
        <svg class="mt-[1px] ml-[6px] h-[52px] w-[53px]"><use href="#rocket"/></svg>
      </div>
      <time class="absolute right-[28px] bottom-[9px] text-[31px] leading-[40px] text-[#929297]">07:53</time>
    </article>
  </section>
</main>
</body>
</html>
